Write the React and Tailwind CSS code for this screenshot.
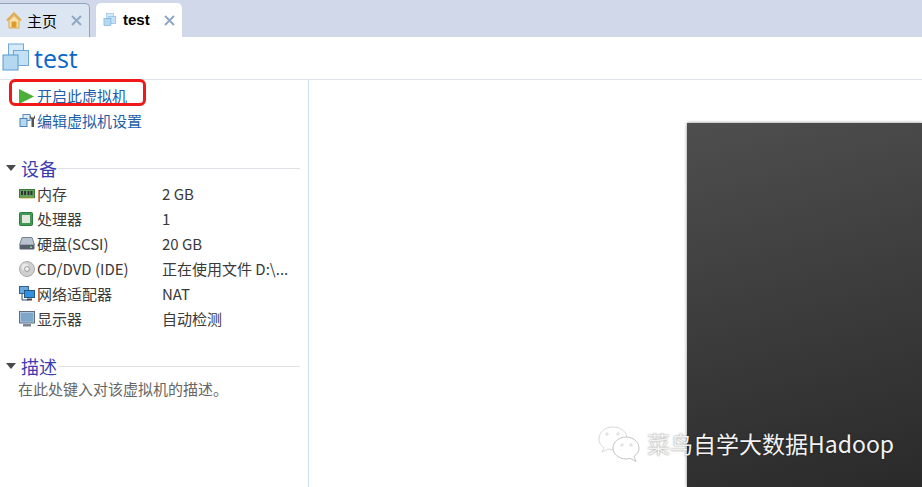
const cjk = { fontFamily: '"Noto Sans CJK SC", "Liberation Sans", sans-serif' };

function VmIcon({ size = 30 }) {
  return (
    <svg width={size} height={size} viewBox="0 0 30 30">
      <rect x="7.5" y="1" width="15" height="15" fill="#d6eaf8" stroke="#6fa8d8" />
      <rect x="12.5" y="7.5" width="15" height="15" fill="#c3e0f4" stroke="#6fa8d8" />
      <rect x="2" y="12" width="15" height="15" fill="#b5d8f1" stroke="#5a9ad0" />
    </svg>
  );
}

function HomeIcon() {
  return (
    <svg width="16" height="17" viewBox="0 0 16 17">
      <path d="M1 8.5 8 1.5l7 7" fill="none" stroke="#e0a94a" strokeWidth="2" />
      <path d="M3 8.5 8 3.5l5 5V16H3z" fill="#f7e2a8" stroke="#d9a44c" />
      <rect x="5.5" y="9.5" width="5" height="6" fill="#e09a2e" />
    </svg>
  );
}

function CloseX() {
  return (
    <svg width="11" height="11" viewBox="0 0 11 11" stroke="#8fa8c4" strokeWidth="2">
      <path d="M1 1l9 9M10 1l-9 9" />
    </svg>
  );
}

function Caret() {
  return (
    <svg width="10" height="6" viewBox="0 0 10 6" className="shrink-0">
      <path d="M0 0h10L5 6z" fill="#4a4a4a" />
    </svg>
  );
}

function PlayIcon() {
  return (
    <svg width="15" height="15" viewBox="0 0 15 15">
      <path d="M0 0l15 7.5L0 15z" fill="#4caf3a" />
    </svg>
  );
}

function EditIcon() {
  return (
    <svg width="18" height="16" viewBox="0 0 18 16">
      <rect x="4" y="1.5" width="7" height="6" fill="#d6eaf8" stroke="#5a8fc4" />
      <rect x="1" y="5.5" width="7" height="8" fill="#b5d8f1" stroke="#4b82b8" />
      <path d="M11 2l1.500 2.500h2L16 2v3l-1 1.500V14h-2.500V6.500L11 5z" fill="#555" />
    </svg>
  );
}

function RamIcon() {
  return (
    <svg width="16" height="10" viewBox="0 0 16 10">
      <rect x="0.5" y="0.5" width="15" height="8" fill="#5fa35a" stroke="#3c7a3a" />
      <path d="M2 2h2v4H2zM5 2h2v4H5zM8.5 2h2v4h-2zM11.5 2h2v4h-2z" fill="#333" />
      <path d="M1 9h14" stroke="#c9b04a" />
    </svg>
  );
}

function CpuIcon() {
  return (
    <svg width="14" height="14" viewBox="0 0 14 14">
      <rect x="0.5" y="0.5" width="13" height="13" rx="1" fill="#3f9a55" stroke="#2e7a42" />
      <rect x="3" y="3" width="8" height="8" fill="#e6e6e0" />
    </svg>
  );
}

function DiskIcon() {
  return (
    <svg width="16" height="13" viewBox="0 0 16 13">
      <path d="M3 0.5h10L15.500 8h-15z" fill="#b9c3cf" stroke="#77828f" />
      <rect x="0.5" y="8" width="15" height="4.5" rx="1" fill="#55606c" />
      <rect x="11" y="9.5" width="2" height="1.5" fill="#7fd07f" />
    </svg>
  );
}

function CdIcon() {
  return (
    <svg width="16" height="16" viewBox="0 0 16 16">
      <circle cx="8" cy="8" r="7.5" fill="#cfcfcf" stroke="#a9a9a9" />
      <circle cx="6" cy="6" r="3.5" fill="#e8e8e8" />
      <circle cx="8" cy="8" r="2.4" fill="#f5f5f5" stroke="#999" />
    </svg>
  );
}

function NetIcon() {
  return (
    <svg width="16" height="16" viewBox="0 0 16 16">
      <rect x="0.5" y="0.5" width="9" height="7" fill="#6aa9dd" stroke="#2f5f8f" />
      <path d="M3 8v6h6" stroke="#2f4f6f" fill="none" />
      <rect x="5.5" y="4.5" width="10" height="7" fill="#2f8fe0" stroke="#24567f" />
      <path d="M8 13.5h5" stroke="#445" strokeWidth="2" />
    </svg>
  );
}

function MonitorIcon() {
  return (
    <svg width="16" height="16" viewBox="0 0 16 16">
      <rect x="0.5" y="0.5" width="15" height="11.5" fill="#a9c4dc" stroke="#5f6f7f" />
      <rect x="2" y="2" width="12" height="8.5" fill="#7ea6c8" />
      <rect x="4" y="13" width="8" height="2.5" fill="#7b8794" />
    </svg>
  );
}

function WeChatIcon() {
  return (
    <svg width="42" height="36" viewBox="0 0 42 36" fill="none" stroke="#cfcfcf" strokeWidth="0.8">
      <path d="M15 1C7 1 1 6 1 13c0 4 2 7 5 9l-2 4 6-3c2 .6 3 .7 5 .7C23 23.7 29 18 29 13 29 6 23 1 15 1z" fill="#fff" />
      <path d="M28 11c-7 0-13 5-13 11s6 11 13 11c1.5 0 3-.2 4-.6l6 3-2-5c3-2 5-5 5-8.4 0-6-6-11-13-11z" fill="#fff" stroke="#b5b5b5" />
      <circle cx="9" cy="8" r="1.2" />
      <circle cx="20" cy="8" r="1.2" />
      <circle cx="24" cy="19" r="1.2" />
      <circle cx="33" cy="19" r="1.2" />
    </svg>
  );
}

const devices = [
  { icon: <RamIcon />, name: '内存', value: '2 GB' },
  { icon: <CpuIcon />, name: '处理器', value: '1' },
  { icon: <DiskIcon />, name: '硬盘(SCSI)', value: '20 GB' },
  { icon: <CdIcon />, name: 'CD/DVD (IDE)', value: '正在使用文件 D:\\...' },
  { icon: <NetIcon />, name: '网络适配器', value: 'NAT' },
  { icon: <MonitorIcon />, name: '显示器', value: '自动检测' },
];

function SectionTitle({ children }) {
  return (
    <div className="flex items-center h-5 pl-[6px] pr-[8px]">
      <Caret />
      <span className="ml-[5px] text-[18px] leading-5 text-[#3c3cb0]">{children}</span>
      <div className="flex-1 h-px bg-[#dfe1e6] ml-px" />
    </div>
  );
}

export default function App() {
  return (
    <div className="relative w-[922px] h-[487px] overflow-hidden bg-white text-[15px] leading-5 text-[#3a3a3a] flex flex-col" style={cjk}>
      {/* tab strip */}
      <div className="h-[37px] shrink-0 bg-[#d0d8ea] flex items-end gap-[6px]">
        <div className="w-[90px] h-[34px] bg-[#dce6f3] border-t border-r border-[#8fa5bb] rounded-tr-[5px] flex items-center pl-[6px]">
          <HomeIcon />
          <span className="ml-[5px] text-black">主页</span>
          <span className="ml-[14px] flex"><CloseX /></span>
        </div>
        <div className="w-[86px] h-[34px] bg-white rounded-t-[5px] flex items-center pl-[7px]">
          <VmIcon size={14} />
          <span className="ml-[6px] text-[15px] font-bold text-black" style={{ fontFamily: '"Liberation Sans", sans-serif' }}>test</span>
          <span className="ml-[14px] flex"><CloseX /></span>
        </div>
      </div>

      {/* vm title */}
      <div className="h-[43px] shrink-0 border-b border-[#dfe3ea] flex items-center pl-px">
        <VmIcon />
        <span className="ml-[3px] text-[25px] text-[#0a66cc]" style={{ fontFamily: '"Open Sans", sans-serif' }}>test</span>
      </div>

      <div className="flex-1 flex min-h-0">
        {/* left panel */}
        <div className="w-[309px] shrink-0 border-r border-[#cfe2f5] flex flex-col">
          <div className="pt-[4px] pl-[19px] text-[#1c5fa8]">
            <div className="h-[24px] flex items-center">
              <PlayIcon />
              <span className="ml-[3px]">开启此虚拟机</span>
            </div>
            <div className="h-[25px] flex items-center">
              <EditIcon />
              <span>编辑虚拟机设置</span>
            </div>
          </div>

          <div className="mt-[25px]"><SectionTitle>设备</SectionTitle></div>
          <div className="mt-[3px] pl-[19px]">
            {devices.map((d) => (
              <div key={d.name} className="h-[25px] flex items-center">
                <span className="w-[18px] flex justify-start">{d.icon}</span>
                <span className="w-[125px] whitespace-nowrap">{d.name}</span>
                <span className="whitespace-nowrap">{d.value}</span>
              </div>
            ))}
          </div>

          <div className="mt-[25px]"><SectionTitle>描述</SectionTitle></div>
          <div className="mt-[3px] pl-[18px] text-[#666]">在此处键入对该虚拟机的描述。</div>
        </div>

        {/* preview */}
        <div className="flex-1 pt-[43px] pl-[378px]">
          <div className="h-full bg-[linear-gradient(165deg,#4e4e4e,#2a2a2a)] shadow-[0_0_3px_rgba(0,0,0,0.5)]" />
        </div>
      </div>

      {/* red annotation */}
      <div className="absolute left-[9px] top-[79px] w-[137px] h-[27px] border-[3px] border-[#f01818] rounded-[6px]" />

      {/* watermark */}
      <div className="absolute left-[598px] top-[426px] flex items-center">
        <WeChatIcon />
        <span className="ml-[7px] mb-[3px] text-[23px] leading-8 text-[#f2f2f2] whitespace-nowrap [text-shadow:0_0_2px_rgba(0,0,0,0.5)]">菜鸟自学大数据Hadoop</span>
      </div>
    </div>
  );
}
